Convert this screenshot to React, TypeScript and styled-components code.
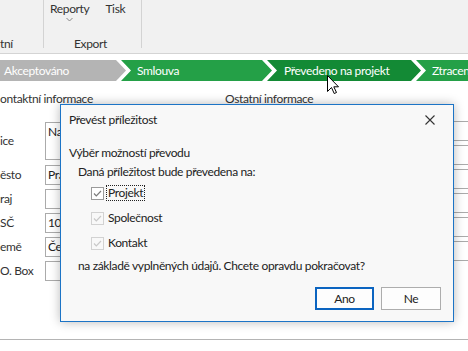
import React from "react";
import styled, { createGlobalStyle } from "styled-components";

const Global = createGlobalStyle`
  html, body { margin: 0; padding: 0; background: #ffffff; }
  body {
    font-family: Lato, "Noto Sans", sans-serif;
    font-size: 12px;
    letter-spacing: -0.35px;
    color: #222;
  }
  * { box-sizing: border-box; }
`;

const Page = styled.div`
  position: relative;
  width: 468px;
  height: 351px;
  overflow: hidden;
  background: #fff;
`;

const Ribbon = styled.div`
  display: flex;
  height: 54px;
  background: #f1f1f1;
  border-bottom: 1px solid #d4d4d4;
`;

const Group = styled.div<{ $w: number; $align?: string }>`
  width: ${(p) => p.$w}px;
  display: flex;
  flex-direction: column;
  justify-content: space-between;
  align-items: ${(p) => p.$align || "center"};
  height: 53px;
`;

const GroupButtons = styled.div`
  align-self: flex-start;
  display: flex;
  gap: 16px;
  padding-top: 1px;
  padding-left: 6px;
`;

const RibbonButton = styled.div`
  display: flex;
  flex-direction: column;
  align-items: center;
  line-height: 16px;
  color: #333;
`;

const GroupLabel = styled.div<{ $mr?: number }>`
  line-height: 16px;
  color: #333;
  margin-bottom: 1px;
  margin-right: ${(p) => p.$mr || 0}px;
`;

const Sep = styled.div`
  width: 1px;
  height: 48px;
  background: #d3d3d3;
`;

const Stage = styled.div`
  display: flex;
  margin-top: 6px;
  height: 21px;
  white-space: nowrap;
`;

const Seg = styled.div<{ $bg: string; $w?: number; $first?: boolean; $pl: number }>`
  flex: ${(p) => (p.$w ? `0 0 ${p.$w}px` : "1 0 auto")};
  margin-left: ${(p) => (p.$first ? 0 : -5)}px;
  background: ${(p) => p.$bg};
  color: #fff;
  line-height: 21px;
  padding-left: ${(p) => p.$pl}px;
  clip-path: ${(p) =>
    p.$first
      ? "polygon(0 0, calc(100% - 10px) 0, 100% 50%, calc(100% - 10px) 100%, 0 100%)"
      : p.$w
      ? "polygon(0 0, calc(100% - 10px) 0, 100% 50%, calc(100% - 10px) 100%, 0 100%, 10px 50%)"
      : "polygon(0 0, 100% 0, 100% 100%, 0 100%, 10px 50%)"};
`;

const Content = styled.div`
  display: flex;
  height: 249px;
  border-bottom: 1px solid #b4b4b4;
  margin-top: 10px;
`;

const Column = styled.div<{ $w: number }>`
  width: ${(p) => p.$w}px;
  flex: 0 0 auto;
  display: flex;
  flex-direction: column;
`;

const SectionTitle = styled.div<{ $mb: number }>`
  line-height: 16px;
  color: #333;
  margin-bottom: ${(p) => p.$mb}px;
`;

const Rows = styled.div`
  display: flex;
  flex-direction: column;
  gap: 4px;
`;

const Row = styled.div<{ $label: number; $mt?: number }>`
  display: grid;
  grid-template-columns: ${(p) => p.$label}px 1fr;
  align-items: center;
  margin-top: ${(p) => p.$mt || 0}px;
`;

const Label = styled.div`
  color: #333;
  line-height: 16px;
`;

const Field = styled.div<{ $h?: number; $w: number }>`
  width: ${(p) => p.$w}px;
  height: ${(p) => p.$h || 20}px;
  border: 1px solid #ababab;
  background: #fff;
  padding: ${(p) => (p.$h ? "2px 2px" : "0 2px")};
  line-height: ${(p) => (p.$h ? "14px" : "18px")};
  color: #222;
  overflow: hidden;
  white-space: nowrap;
`;

const Dialog = styled.div`
  position: absolute;
  left: 60px;
  top: 104px;
  width: 394px;
  height: 218px;
  background: #f8f8f8;
  border: 1px solid #1c74c6;
  box-shadow: 0 0 10px rgba(0, 0, 0, 0.28);
  display: flex;
  flex-direction: column;
  padding: 7px 12px 0 8px;
`;

const DialogHeader = styled.div`
  display: flex;
  justify-content: space-between;
  align-items: center;
  height: 16px;
  padding-right: 6px;
`;

const Title = styled.div`
  line-height: 16px;
  color: #222;
`;

const Close = styled.div`
  width: 10px;
  height: 10px;
  display: flex;
`;

const Text = styled.div<{ $mt: number; $indent?: number }>`
  line-height: 16px;
  color: #222;
  margin-top: ${(p) => p.$mt}px;
  margin-left: ${(p) => p.$indent || 0}px;
`;

const Checks = styled.div`
  display: flex;
  flex-direction: column;
  margin-left: 22px;
`;

const CheckRow = styled.div`
  display: flex;
  align-items: center;
  height: 25px;
`;

const Box = styled.div<{ $disabled?: boolean }>`
  width: 13px;
  height: 13px;
  border: 1px solid ${(p) => (p.$disabled ? "#d2d2d2" : "#9a9a9a")};
  background: ${(p) => (p.$disabled ? "#f8f8f8" : "#fff")};
  display: flex;
  align-items: center;
  justify-content: center;
  margin-top: 1px;
`;

const CheckLabel = styled.div<{ $focus?: boolean }>`
  margin-left: 2px;
  padding: 0 1px;
  line-height: 14px;
  border: 1px ${(p) => (p.$focus ? "dotted #222" : "solid transparent")};
  color: #222;
`;

const Buttons = styled.div`
  display: flex;
  justify-content: flex-end;
  gap: 7px;
  margin-top: 13px;
`;

const Btn = styled.div<{ $primary?: boolean }>`
  width: ${(p) => (p.$primary ? 59 : 60)}px;
  height: 23px;
  border: ${(p) => (p.$primary ? "2px solid #0b64c0" : "1px solid #adadad")};
  background: #fdfdfd;
  display: flex;
  align-items: center;
  justify-content: center;
  color: #222;
`;

const Cursor = styled.svg`
  position: absolute;
  left: 327px;
  top: 75px;
`;

const Check = ({ color }: { color: string }) => (
  <svg width="11" height="11" viewBox="0 0 11 11">
    <path d="M2 5.5 L4.3 7.8 L9 3" fill="none" stroke={color} strokeWidth="1.2" />
  </svg>
);

export default function App() {
  return (
    <>
      <Global />
      <Page>
        <Ribbon>
          <Group $w={43} $align="flex-start">
            <div />
            <GroupLabel>tní</GroupLabel>
          </Group>
          <Sep />
          <Group $w={97}>
            <GroupButtons>
              <RibbonButton>
                Reporty
                <svg width="7" height="5" viewBox="0 0 7 5">
                  <path d="M0.5 1 L3.5 4 L6.5 1" fill="none" stroke="#888" strokeWidth="1" />
                </svg>
              </RibbonButton>
              <RibbonButton>Tisk</RibbonButton>
            </GroupButtons>
            <GroupLabel $mr={4}>Export</GroupLabel>
          </Group>
          <Sep />
        </Ribbon>

        <Stage>
          <Seg $first $w={126} $bg="#b4b4b4" $pl={4}>
            Akceptováno
          </Seg>
          <Seg $w={151} $bg="#24a047" $pl={16}>
            Smlouva
          </Seg>
          <Seg $w={154} $bg="#138a35" $pl={17}>
            Převedeno na projekt
          </Seg>
          <Seg $bg="#24a047" $pl={16}>
            Ztracená
          </Seg>
        </Stage>

        <Content>
          <Column $w={225}>
            <SectionTitle $mb={15}>ontaktní informace</SectionTitle>
            <Rows>
              <Row $label={45}>
                <Label>ice</Label>
                <Field $w={170} $h={38}>
                  Na
                </Field>
              </Row>
              <Row $label={45} $mt={1}>
                <Label>ěsto</Label>
                <Field $w={170}>Praha</Field>
              </Row>
              <Row $label={45}>
                <Label>raj</Label>
                <Field $w={170} />
              </Row>
              <Row $label={45}>
                <Label>SČ</Label>
                <Field $w={170}>10000</Field>
              </Row>
              <Row $label={45}>
                <Label>emě</Label>
                <Field $w={170}>Česká republika</Field>
              </Row>
              <Row $label={45}>
                <Label>O. Box</Label>
                <Field $w={170} />
              </Row>
            </Rows>
          </Column>
          <Column $w={260}>
            <SectionTitle $mb={14}>Ostatní informace</SectionTitle>
            <Rows>
              {["Telefon", "Mobil", "Fax", "E-mail", "Web", "Zdroj"].map((l) => (
                <Row $label={90} key={l}>
                  <Label>{l}</Label>
                  <Field $w={170} />
                </Row>
              ))}
            </Rows>
          </Column>
        </Content>

        <Dialog>
          <DialogHeader>
            <Title>Převést příležitost</Title>
            <Close>
              <svg width="10" height="10" viewBox="0 0 10 10">
                <path d="M0.5 0.5 L9.5 9.5 M9.5 0.5 L0.5 9.5" stroke="#333" strokeWidth="1.1" />
              </svg>
            </Close>
          </DialogHeader>
          <Text $mt={17}>Výběr možností převodu</Text>
          <Text $mt={3} $indent={9}>
            Daná příležitost bude převedena na:
          </Text>
          <Checks>
            <CheckRow>
              <Box>
                <Check color="#7a7a7a" />
              </Box>
              <CheckLabel $focus>Projekt</CheckLabel>
            </CheckRow>
            <CheckRow>
              <Box $disabled>
                <Check color="#c8c8c8" />
              </Box>
              <CheckLabel>Společnost</CheckLabel>
            </CheckRow>
            <CheckRow>
              <Box $disabled>
                <Check color="#c8c8c8" />
              </Box>
              <CheckLabel>Kontakt</CheckLabel>
            </CheckRow>
          </Checks>
          <Text $mt={3} $indent={9}>
            na základě vyplněných údajů. Chcete opravdu pokračovat?
          </Text>
          <Buttons>
            <Btn $primary>Ano</Btn>
            <Btn>Ne</Btn>
          </Buttons>
        </Dialog>

        <Cursor width="13" height="20" viewBox="0 0 13 20">
          <path
            d="M0.5 0.5 L0.5 16.5 L4.5 12.5 L7.2 18.5 L9.5 17.5 L6.8 11.8 L11.5 11.8 Z"
            fill="#fff"
            stroke="#000"
            strokeWidth="1"
          />
        </Cursor>
      </Page>
    </>
  );
}
